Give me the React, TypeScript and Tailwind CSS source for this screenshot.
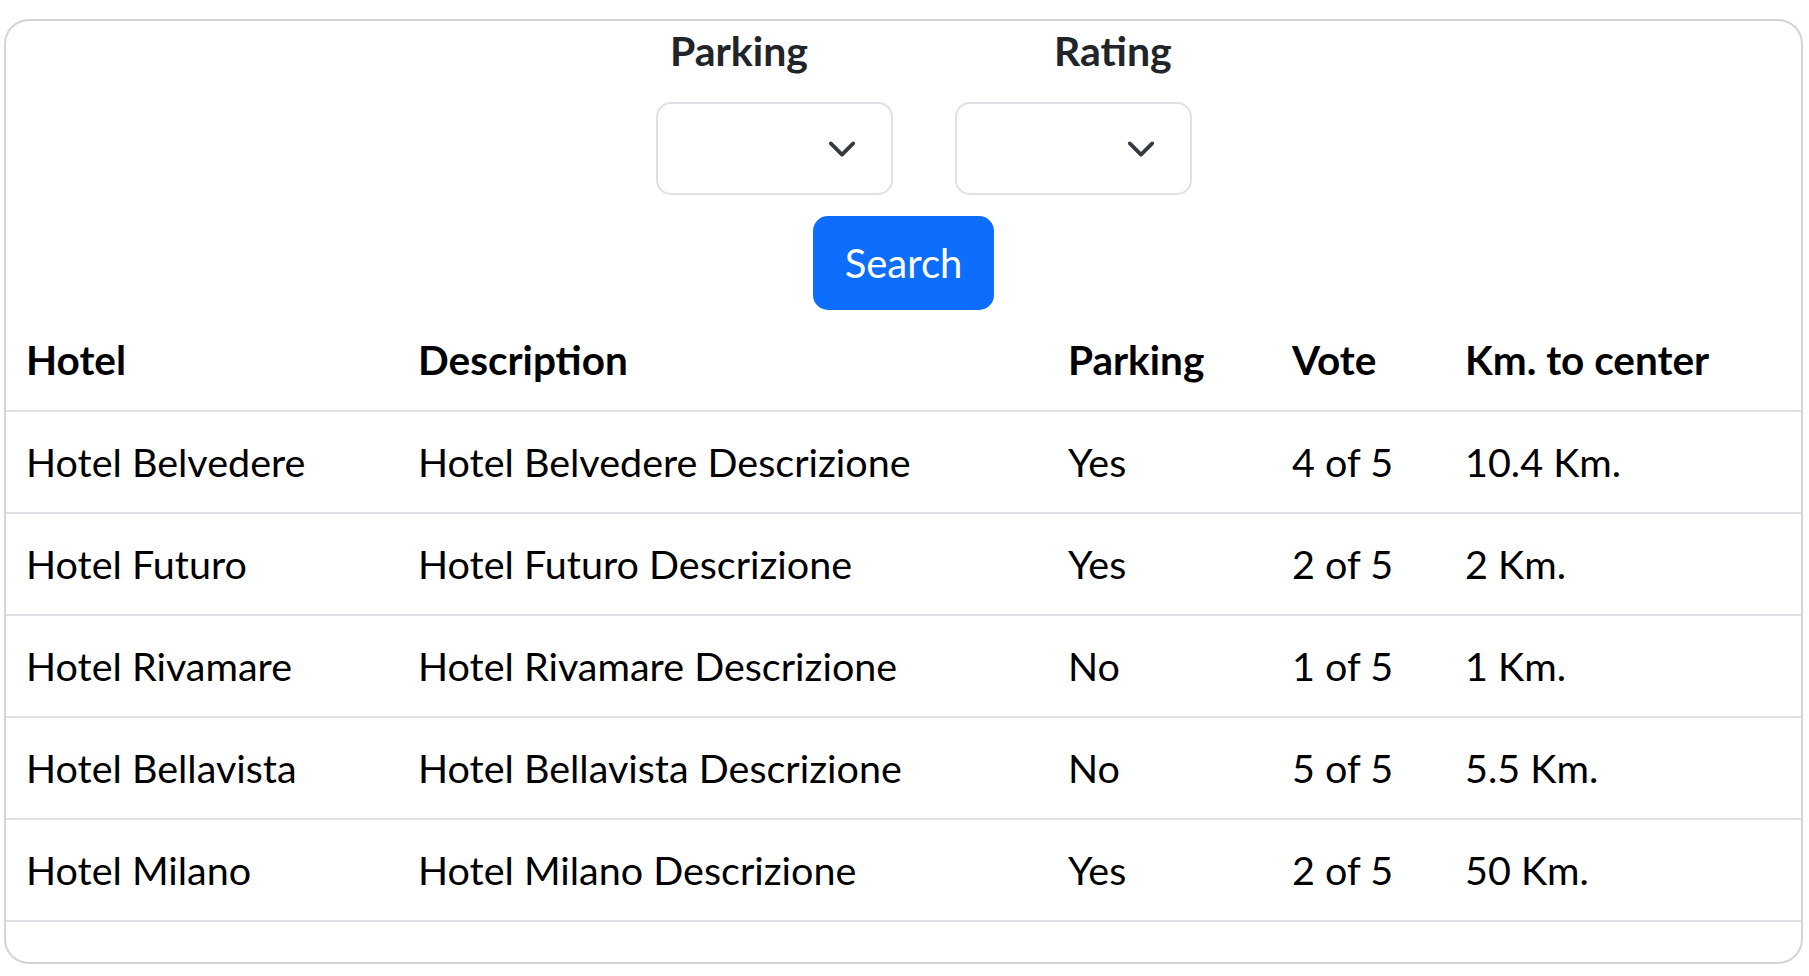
import { FC } from 'react';

type Hotel = {
  name: string;
  description: string;
  parking: string;
  vote: string;
  distance: string;
};

const hotels: Hotel[] = [
  { name: 'Hotel Belvedere', description: 'Hotel Belvedere Descrizione', parking: 'Yes', vote: '4 of 5', distance: '10.4 Km.' },
  { name: 'Hotel Futuro', description: 'Hotel Futuro Descrizione', parking: 'Yes', vote: '2 of 5', distance: '2 Km.' },
  { name: 'Hotel Rivamare', description: 'Hotel Rivamare Descrizione', parking: 'No', vote: '1 of 5', distance: '1 Km.' },
  { name: 'Hotel Bellavista', description: 'Hotel Bellavista Descrizione', parking: 'No', vote: '5 of 5', distance: '5.5 Km.' },
  { name: 'Hotel Milano', description: 'Hotel Milano Descrizione', parking: 'Yes', vote: '2 of 5', distance: '50 Km.' },
];

const Chevron: FC = () => (
  <svg
    className="pointer-events-none absolute right-[36px] top-1/2 -translate-y-1/2"
    width="30"
    height="30"
    viewBox="0 0 16 16"
    fill="none"
    stroke="#343a40"
    strokeWidth="2"
    strokeLinecap="round"
    strokeLinejoin="round"
  >
    <path d="M2 5l6 6 6-6" />
  </svg>
);

const Select: FC = () => (
  <div className="relative h-[93px] w-[237px]">
    <select className="h-full w-full appearance-none rounded-[15px] border-2 border-[#dee2e6] bg-white px-[30px] text-[40px] outline-none">
      <option value=""></option>
    </select>
    <Chevron />
  </div>
);

export default function App() {
  return (
    <div className="min-h-screen bg-white font-['Lato','Open_Sans',sans-serif]">
      <div className="ml-[4px] mt-[19px] w-[1799px] overflow-hidden rounded-[25px] border-2 border-[#d4d4d4]">
        {/* filters */}
        <div className="flex justify-center gap-[62px] pl-[41px]">
          <div className="flex flex-col">
            <label className="ml-[14px] h-[60px] text-[41px] font-bold leading-[60px] text-[#212529]">
              Parking
            </label>
            <div className="mt-[21px]">
              <Select />
            </div>
          </div>
          <div className="flex flex-col">
            <label className="ml-[99px] h-[60px] text-[41px] font-bold leading-[60px] text-[#212529]">
              Rating
            </label>
            <div className="mt-[21px]">
              <Select />
            </div>
          </div>
        </div>
        <div className="mt-[21px] flex justify-center">
          <button className="h-[94px] w-[181px] rounded-[15px] bg-[#0d6efd] text-[40px] leading-[60px] text-white">
            Search
          </button>
        </div>

        {/* results */}
        <table className="mb-[40px] w-full table-fixed border-collapse text-left text-[39.5px] leading-[60px] text-black">
          <thead>
            <tr className="border-b-2 border-[#dee2e6] text-[40.5px]">
              <th className="w-[392px] py-5 pl-[20px] pr-5 font-bold">Hotel</th>
              <th className="w-[650px] px-5 py-5 font-bold">Description</th>
              <th className="w-[224px] px-5 py-5 font-bold">Parking</th>
              <th className="w-[173px] px-5 py-5 font-bold">Vote</th>
              <th className="px-5 py-5 font-bold">Km. to center</th>
            </tr>
          </thead>
          <tbody>
            {hotels.map((h) => (
              <tr key={h.name} className="border-b-2 border-[#dee2e6]">
                <td className="py-5 pl-[20px] pr-5">{h.name}</td>
                <td className="px-5 py-5">{h.description}</td>
                <td className="px-5 py-5">{h.parking}</td>
                <td className="px-5 py-5">{h.vote}</td>
                <td className="px-5 py-5">{h.distance}</td>
              </tr>
            ))}
          </tbody>
        </table>
      </div>
    </div>
  );
}
